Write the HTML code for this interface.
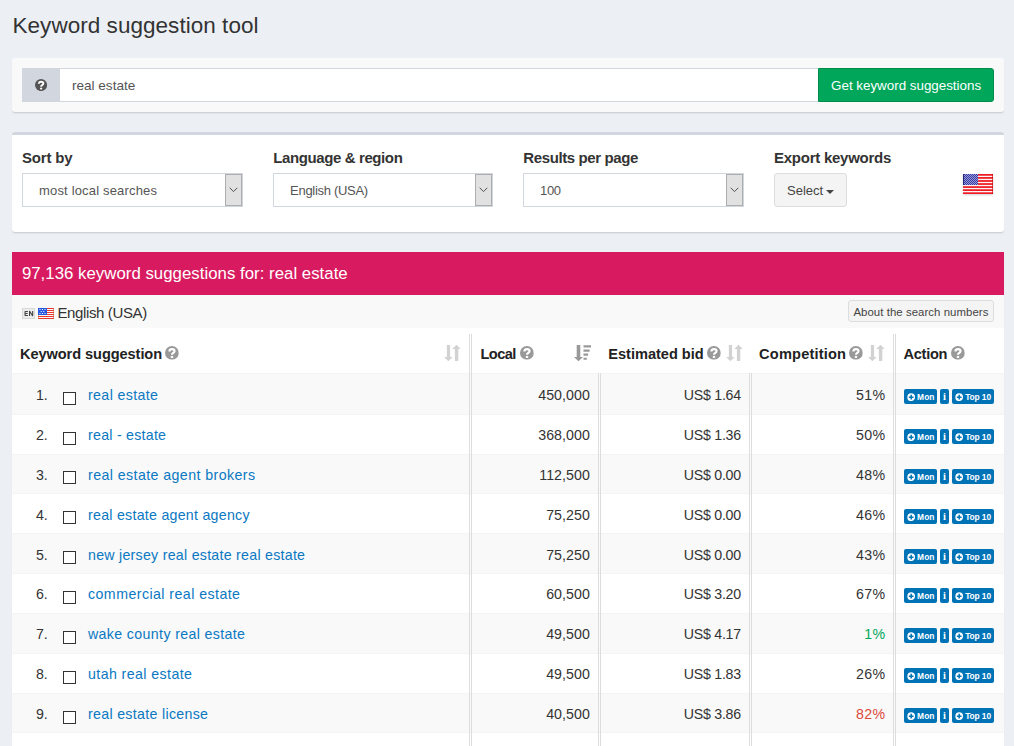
<!DOCTYPE html>
<html><head><meta charset="utf-8"><title>Keyword suggestion tool</title>
<style>
*{box-sizing:border-box;margin:0;padding:0}
html,body{width:1014px;height:746px;overflow:hidden}
body{background:#ecf0f5;font-family:"Liberation Sans",sans-serif;color:#333;position:relative;font-size:14px}
.a{position:absolute;white-space:nowrap;line-height:1}
.box{position:absolute;background:#fff;border-radius:3px;box-shadow:0 1px 1px rgba(0,0,0,.1),0 2px 1px rgba(0,0,0,.03)}
.sel{position:absolute;height:34px;background:#fff;border:1px solid #d2d6de}
.sel .arr{position:absolute;right:0;top:0;width:17px;height:32px;background:#e1e1e1;border:1px solid #adadad}
.sel svg{position:absolute;left:3px;top:12px}
.row{position:absolute;left:12px;width:992px;border-top:1px solid #f4f4f4}
.odd{background:#f9f9f9}
.vs{position:absolute;width:3px;border-left:1px solid #ddd;border-right:1px solid #ddd}
.cb{position:absolute;left:63px;width:13px;height:13px;border:1px solid #333;background:#fff}
.btn{position:absolute;height:15px;background:#0073b7;border-radius:2px}
.ab{position:absolute}
</style></head>
<body>
<svg width="0" height="0" style="position:absolute">
<defs>
<symbol id="q" viewBox="0 0 14 14"><circle cx="7" cy="7" r="7"/><path d="M4.5 5.5C4.5 3.9 5.5 3.1 7 3.1C8.6 3.1 9.7 3.9 9.7 5.2C9.7 7.1 7.1 7 7.1 8.9" fill="none" stroke="#fff" stroke-width="2.2"/><rect x="5.9" y="10.1" width="2.4" height="2" fill="#fff"/></symbol>
<symbol id="pc" viewBox="0 0 10 10"><circle cx="5" cy="5" r="4.6" fill="#fff"/><path d="M4.1 2.2h1.8v1.9h1.9v1.8h-1.9v1.9h-1.8v-1.9h-1.9v-1.8h1.9z" fill="#0073b7"/></symbol>
<symbol id="srt" viewBox="0 0 18 18"><path d="M2.85 1h3.25v11.9h2.6l-4.3 4.3l-4.4-4.3h2.85z"/><path d="M10.9 17h3.4v-12.1h2.4l-4.2-4.2l-4.2 4.2h2.6z"/></symbol>
<symbol id="srtd" viewBox="0 0 18 18"><path d="M2.7 1.1h3.6v11.9h2.7l-4.5 4.3l-4.5-4.3h2.7z"/><path d="M9.5 1.3h7.5v2.3h-7.5zM9.5 5.4h6.1v2.4h-6.1zM9.5 9.5h4.6v2.2h-4.6zM9.5 13.7h3.3v2h-3.3z"/></symbol>
<pattern id="st" width="2" height="2" patternUnits="userSpaceOnUse"><rect width="2" height="2" fill="#3439a8"/><circle cx=".5" cy=".5" r=".46" fill="#fff"/><circle cx="1.5" cy="1.5" r=".46" fill="#fff"/></pattern>
<symbol id="us" viewBox="0 0 30 20"><rect width="30" height="20" fill="#fff4f4"/><g fill="#ee1b24"><rect y="0" width="30" height="1.75"/><rect y="3.05" width="30" height="1.75"/><rect y="6.1" width="30" height="1.75"/><rect y="9.15" width="30" height="1.75"/><rect y="12.2" width="30" height="1.75"/><rect y="15.25" width="30" height="1.75"/><rect y="18.3" width="30" height="1.7"/></g><rect x="29" width="1" height="20" fill="#c40000" opacity=".6"/><rect width="15" height="11" fill="url(#st)"/><rect width="1" height="11" fill="#23277a"/></symbol>
<symbol id="us2" viewBox="0 0 16 11"><rect width="16" height="11" fill="#fff"/><g fill="#e8352e"><rect y="0" width="16" height="1"/><rect y="2" width="16" height="1"/><rect y="4" width="16" height="1"/><rect y="6" width="16" height="1"/><rect y="8" width="16" height="1"/><rect y="10" width="16" height="1"/></g><rect x="0" width=".7" height="11" fill="#c8603a" opacity=".7"/><rect x="15.3" width=".7" height="11" fill="#c8603a" opacity=".8"/><rect width="9" height="7" fill="#2458de"/><g fill="#fff"><rect x="1.5" y="1" width="1" height="1"/><rect x="4" y="1" width="1" height="1"/><rect x="6.5" y="1" width="1" height="1"/><rect x="2.7" y="3" width="1" height="1"/><rect x="5.2" y="3" width="1" height="1"/><rect x="1.5" y="5" width="1" height="1"/><rect x="4" y="5" width="1" height="1"/><rect x="6.5" y="5" width="1" height="1"/></g></symbol>
</defs></svg>
<div class="box" style="left:12px;top:58px;width:992px;height:54px;background:#f9f9f9"></div>
<div class="ab" style="left:22px;top:68px;width:38px;height:34px;background:#d2d6de"></div>
<svg class="ab" style="left:34.9px;top:78.8px" width="12.1" height="12.1" fill="#555"><use href="#q"/></svg>
<div class="ab" style="left:60px;top:68px;width:758px;height:34px;background:#fff;border:1px solid #d2d6de;border-left:0;border-right:0"></div>
<div class="ab" style="left:818px;top:68px;width:176px;height:34px;background:#00a65a;border:1px solid #008d4c;border-radius:0 3px 3px 0"></div>
<div class="box" style="left:12px;top:132px;width:992px;height:100px;border-top:3px solid #d2d6de"></div>
<div class="sel" style="left:22px;top:173px;width:221px"><div class="arr"><svg width="9" height="6" viewBox="0 0 9 6"><path d="M0.7 0.8L4.5 4.6L8.3 0.8" fill="none" stroke="#505050" stroke-width="1"/></svg></div></div>
<div class="sel" style="left:273px;top:173px;width:220px"><div class="arr"><svg width="9" height="6" viewBox="0 0 9 6"><path d="M0.7 0.8L4.5 4.6L8.3 0.8" fill="none" stroke="#505050" stroke-width="1"/></svg></div></div>
<div class="sel" style="left:523px;top:173px;width:221px"><div class="arr"><svg width="9" height="6" viewBox="0 0 9 6"><path d="M0.7 0.8L4.5 4.6L8.3 0.8" fill="none" stroke="#505050" stroke-width="1"/></svg></div></div>
<div class="ab" style="left:774px;top:173px;width:73px;height:34px;background:#f4f4f4;border:1px solid #ddd;border-radius:3px"></div>
<div class="ab" style="left:826px;top:190px;width:0;height:0;border-left:4px solid transparent;border-right:4px solid transparent;border-top:4px solid #444"></div>
<svg class="ab" style="left:963px;top:174px;filter:drop-shadow(0 1px 1px rgba(0,0,0,.18))" width="30" height="20"><use href="#us"/></svg>
<div class="box" style="left:12px;top:252px;width:992px;height:520px;border-radius:3px 3px 0 0"></div>
<div class="ab" style="left:12px;top:252px;width:992px;height:43px;background:#d81b60"></div>
<div class="ab" style="left:12px;top:295px;width:992px;height:33px;background:#f9f9f9"></div>
<svg class="ab" style="left:22px;top:308px" width="13" height="11" viewBox="0 0 13 11"><rect x=".5" y=".5" width="12" height="10" fill="#ececec" stroke="#d9d9d9"/><path d="M5.9 3.55H3.05V7.45H5.9M3.05 5.5H5.6M7.55 8V3L10.65 8V3" fill="none" stroke="#444" stroke-width="1.1" stroke-linejoin="bevel"/></svg>
<svg class="ab" style="left:38px;top:308px" width="16" height="11"><use href="#us2"/></svg>
<div class="ab" style="left:848px;top:300px;width:146px;height:22px;background:#f4f4f4;border:1px solid #ddd;border-radius:3px"></div>
<svg class="ab" style="left:165.1px;top:346.1px" width="13.8" height="13.8" fill="#999"><use href="#q"/></svg>
<svg class="ab" style="left:520.0px;top:346.1px" width="13.8" height="13.8" fill="#999"><use href="#q"/></svg>
<svg class="ab" style="left:707.0px;top:346.1px" width="13.8" height="13.8" fill="#999"><use href="#q"/></svg>
<svg class="ab" style="left:849.0px;top:346.1px" width="13.8" height="13.8" fill="#999"><use href="#q"/></svg>
<svg class="ab" style="left:950.8px;top:346.1px" width="13.8" height="13.8" fill="#999"><use href="#q"/></svg>
<svg class="ab" style="left:444px;top:344px" width="18" height="18" fill="#d2d2d2"><use href="#srt"/></svg>
<svg class="ab" style="left:574px;top:344px" width="18" height="18" fill="#999"><use href="#srtd"/></svg>
<svg class="ab" style="left:725.7px;top:344px" width="18" height="18" fill="#d2d2d2"><use href="#srt"/></svg>
<svg class="ab" style="left:868.2px;top:344px" width="18" height="18" fill="#d2d2d2"><use href="#srt"/></svg>
<div class="row odd" style="top:373px;height:41px"></div><div class="cb" style="top:392px"></div><div class="btn" style="left:904px;top:389px;width:33px"></div><svg class="ab" style="left:906.7px;top:392.7px" width="8.4" height="8.4"><use href="#pc"/></svg><div class="btn" style="left:940px;top:389px;width:9px"></div><div class="a" style="left:943px;top:391.8px;font-family:'Liberation Serif',serif;font-size:10.5px;font-weight:bold;color:#fff">i</div><div class="btn" style="left:952px;top:389px;width:42px"></div><svg class="ab" style="left:954.8px;top:392.7px" width="8.4" height="8.4"><use href="#pc"/></svg>
<div class="row" style="top:414px;height:40px"></div><div class="cb" style="top:432px"></div><div class="btn" style="left:904px;top:429px;width:33px"></div><svg class="ab" style="left:906.7px;top:432.7px" width="8.4" height="8.4"><use href="#pc"/></svg><div class="btn" style="left:940px;top:429px;width:9px"></div><div class="a" style="left:943px;top:431.8px;font-family:'Liberation Serif',serif;font-size:10.5px;font-weight:bold;color:#fff">i</div><div class="btn" style="left:952px;top:429px;width:42px"></div><svg class="ab" style="left:954.8px;top:432.7px" width="8.4" height="8.4"><use href="#pc"/></svg>
<div class="row odd" style="top:454px;height:39px"></div><div class="cb" style="top:471px"></div><div class="btn" style="left:904px;top:469px;width:33px"></div><svg class="ab" style="left:906.7px;top:472.7px" width="8.4" height="8.4"><use href="#pc"/></svg><div class="btn" style="left:940px;top:469px;width:9px"></div><div class="a" style="left:943px;top:471.8px;font-family:'Liberation Serif',serif;font-size:10.5px;font-weight:bold;color:#fff">i</div><div class="btn" style="left:952px;top:469px;width:42px"></div><svg class="ab" style="left:954.8px;top:472.7px" width="8.4" height="8.4"><use href="#pc"/></svg>
<div class="row" style="top:493px;height:40px"></div><div class="cb" style="top:511px"></div><div class="btn" style="left:904px;top:509px;width:33px"></div><svg class="ab" style="left:906.7px;top:512.7px" width="8.4" height="8.4"><use href="#pc"/></svg><div class="btn" style="left:940px;top:509px;width:9px"></div><div class="a" style="left:943px;top:511.8px;font-family:'Liberation Serif',serif;font-size:10.5px;font-weight:bold;color:#fff">i</div><div class="btn" style="left:952px;top:509px;width:42px"></div><svg class="ab" style="left:954.8px;top:512.7px" width="8.4" height="8.4"><use href="#pc"/></svg>
<div class="row odd" style="top:533px;height:40px"></div><div class="cb" style="top:551px"></div><div class="btn" style="left:904px;top:549px;width:33px"></div><svg class="ab" style="left:906.7px;top:552.7px" width="8.4" height="8.4"><use href="#pc"/></svg><div class="btn" style="left:940px;top:549px;width:9px"></div><div class="a" style="left:943px;top:551.8px;font-family:'Liberation Serif',serif;font-size:10.5px;font-weight:bold;color:#fff">i</div><div class="btn" style="left:952px;top:549px;width:42px"></div><svg class="ab" style="left:954.8px;top:552.7px" width="8.4" height="8.4"><use href="#pc"/></svg>
<div class="row" style="top:573px;height:40px"></div><div class="cb" style="top:591px"></div><div class="btn" style="left:904px;top:588px;width:33px"></div><svg class="ab" style="left:906.7px;top:591.7px" width="8.4" height="8.4"><use href="#pc"/></svg><div class="btn" style="left:940px;top:588px;width:9px"></div><div class="a" style="left:943px;top:590.8px;font-family:'Liberation Serif',serif;font-size:10.5px;font-weight:bold;color:#fff">i</div><div class="btn" style="left:952px;top:588px;width:42px"></div><svg class="ab" style="left:954.8px;top:591.7px" width="8.4" height="8.4"><use href="#pc"/></svg>
<div class="row odd" style="top:613px;height:40px"></div><div class="cb" style="top:631px"></div><div class="btn" style="left:904px;top:628px;width:33px"></div><svg class="ab" style="left:906.7px;top:631.7px" width="8.4" height="8.4"><use href="#pc"/></svg><div class="btn" style="left:940px;top:628px;width:9px"></div><div class="a" style="left:943px;top:630.8px;font-family:'Liberation Serif',serif;font-size:10.5px;font-weight:bold;color:#fff">i</div><div class="btn" style="left:952px;top:628px;width:42px"></div><svg class="ab" style="left:954.8px;top:631.7px" width="8.4" height="8.4"><use href="#pc"/></svg>
<div class="row" style="top:653px;height:40px"></div><div class="cb" style="top:671px"></div><div class="btn" style="left:904px;top:668px;width:33px"></div><svg class="ab" style="left:906.7px;top:671.7px" width="8.4" height="8.4"><use href="#pc"/></svg><div class="btn" style="left:940px;top:668px;width:9px"></div><div class="a" style="left:943px;top:670.8px;font-family:'Liberation Serif',serif;font-size:10.5px;font-weight:bold;color:#fff">i</div><div class="btn" style="left:952px;top:668px;width:42px"></div><svg class="ab" style="left:954.8px;top:671.7px" width="8.4" height="8.4"><use href="#pc"/></svg>
<div class="row odd" style="top:693px;height:39px"></div><div class="cb" style="top:711px"></div><div class="btn" style="left:904px;top:708px;width:33px"></div><svg class="ab" style="left:906.7px;top:711.7px" width="8.4" height="8.4"><use href="#pc"/></svg><div class="btn" style="left:940px;top:708px;width:9px"></div><div class="a" style="left:943px;top:710.8px;font-family:'Liberation Serif',serif;font-size:10.5px;font-weight:bold;color:#fff">i</div><div class="btn" style="left:952px;top:708px;width:42px"></div><svg class="ab" style="left:954.8px;top:711.7px" width="8.4" height="8.4"><use href="#pc"/></svg>
<div class="row" style="top:732px;height:20px"></div>
<div class="vs" style="left:469px;top:334px;height:420px"></div>
<div class="vs" style="left:598px;top:373px;height:380px"></div>
<div class="vs" style="left:749px;top:373px;height:380px"></div>
<div class="vs" style="left:893px;top:334px;height:420px"></div>
<div class="a" id="title" style="left:12.5px;top:15.35px;font-size:22.5px;letter-spacing:0.038px;color:#333">Keyword suggestion tool</div>
<div class="a" id="inp" style="left:71.9px;top:79.00px;font-size:13.6px;letter-spacing:-0.008px;color:#555">real estate</div>
<div class="a" id="gks" style="left:831.1px;top:79.10px;font-size:13.4px;letter-spacing:-0.016px;color:#fff">Get keyword suggestions</div>
<div class="a" id="l1" style="left:21.9px;top:149.90px;font-size:15px;letter-spacing:-0.165px;font-weight:bold">Sort by</div>
<div class="a" id="l2" style="left:273.3px;top:149.90px;font-size:15px;letter-spacing:-0.396px;font-weight:bold">Language &amp; region</div>
<div class="a" id="l3" style="left:523.3px;top:149.90px;font-size:15px;letter-spacing:-0.392px;font-weight:bold">Results per page</div>
<div class="a" id="l4" style="left:774.0px;top:149.90px;font-size:15px;letter-spacing:-0.255px;font-weight:bold">Export keywords</div>
<div class="a" id="s1" style="left:39.0px;top:184.10px;font-size:13px;letter-spacing:0.173px;color:#555">most local searches</div>
<div class="a" id="s2" style="left:290.1px;top:184.10px;font-size:13px;letter-spacing:-0.295px;color:#555">English (USA)</div>
<div class="a" id="s3" style="left:540.1px;top:184.10px;font-size:13px;letter-spacing:-0.352px;color:#555">100</div>
<div class="a" id="selb" style="left:787.1px;top:184.10px;font-size:13px;letter-spacing:-0.028px;color:#444">Select</div>
<div class="a" id="cnt" style="left:21.9px;top:266.30px;font-size:16.8px;letter-spacing:0.028px;color:#fff">97,136 keyword suggestions for: real estate</div>
<div class="a" id="eng" style="left:57.4px;top:304.90px;font-size:15px;letter-spacing:-0.367px;">English (USA)</div>
<div class="a" id="abt" style="left:853.4px;top:307.10px;font-size:11.4px;letter-spacing:0.060px;color:#444">About the search numbers</div>
<div class="a" id="h1" style="left:20.0px;top:346.90px;font-size:14.6px;letter-spacing:-0.084px;font-weight:bold;color:#222">Keyword suggestion</div>
<div class="a" id="h2" style="left:480.4px;top:346.90px;font-size:14.6px;letter-spacing:-0.531px;font-weight:bold;color:#222">Local</div>
<div class="a" id="h3" style="left:608.3px;top:346.90px;font-size:14.6px;letter-spacing:-0.024px;font-weight:bold;color:#222">Estimated bid</div>
<div class="a" id="h4" style="left:759.1px;top:346.90px;font-size:14.6px;letter-spacing:0.177px;font-weight:bold;color:#222">Competition</div>
<div class="a" id="h5" style="left:903.5px;top:346.90px;font-size:14.6px;letter-spacing:-0.281px;font-weight:bold;color:#222">Action</div>
<div class="a" id="n0" style="left:36.1px;top:387.90px;font-size:14.2px;letter-spacing:-0.144px;">1.</div>
<div class="a" id="k0" style="left:88.0px;top:387.90px;font-size:14.2px;letter-spacing:0.375px;color:#0a78c2">real estate</div>
<div class="a" id="a0" style="right:424.15px;top:387.90px;font-size:14.2px;letter-spacing:0.050px;">450,000</div>
<div class="a" id="b0" style="right:273.17px;top:387.90px;font-size:14.2px;letter-spacing:-0.270px;">US$ 1.64</div>
<div class="a" id="c0" style="right:128.40px;top:387.90px;font-size:14.2px;letter-spacing:0.400px;color:#333">51%</div>
<div class="a" id="m0" style="left:917.1px;top:392.80px;font-size:8.4px;letter-spacing:0.091px;color:#fff;font-weight:bold">Mon</div>
<div class="a" id="t0" style="left:965.2px;top:392.80px;font-size:8.4px;letter-spacing:-0.095px;color:#fff;font-weight:bold">Top 10</div>
<div class="a" id="n1" style="left:36.1px;top:427.90px;font-size:14.2px;letter-spacing:-0.144px;">2.</div>
<div class="a" id="k1" style="left:88.0px;top:427.90px;font-size:14.2px;letter-spacing:0.257px;color:#0a78c2">real - estate</div>
<div class="a" id="a1" style="right:424.15px;top:427.90px;font-size:14.2px;letter-spacing:0.050px;">368,000</div>
<div class="a" id="b1" style="right:273.17px;top:427.90px;font-size:14.2px;letter-spacing:-0.270px;">US$ 1.36</div>
<div class="a" id="c1" style="right:128.40px;top:427.90px;font-size:14.2px;letter-spacing:0.400px;color:#333">50%</div>
<div class="a" id="m1" style="left:917.1px;top:432.80px;font-size:8.4px;letter-spacing:0.091px;color:#fff;font-weight:bold">Mon</div>
<div class="a" id="t1" style="left:965.2px;top:432.80px;font-size:8.4px;letter-spacing:-0.095px;color:#fff;font-weight:bold">Top 10</div>
<div class="a" id="n2" style="left:36.1px;top:467.90px;font-size:14.2px;letter-spacing:-0.144px;">3.</div>
<div class="a" id="k2" style="left:88.0px;top:467.90px;font-size:14.2px;letter-spacing:0.419px;color:#0a78c2">real estate agent brokers</div>
<div class="a" id="a2" style="right:424.15px;top:467.90px;font-size:14.2px;letter-spacing:0.050px;">112,500</div>
<div class="a" id="b2" style="right:273.17px;top:467.90px;font-size:14.2px;letter-spacing:-0.270px;">US$ 0.00</div>
<div class="a" id="c2" style="right:128.40px;top:467.90px;font-size:14.2px;letter-spacing:0.400px;color:#333">48%</div>
<div class="a" id="m2" style="left:917.1px;top:472.80px;font-size:8.4px;letter-spacing:0.091px;color:#fff;font-weight:bold">Mon</div>
<div class="a" id="t2" style="left:965.2px;top:472.80px;font-size:8.4px;letter-spacing:-0.095px;color:#fff;font-weight:bold">Top 10</div>
<div class="a" id="n3" style="left:36.1px;top:507.90px;font-size:14.2px;letter-spacing:-0.144px;">4.</div>
<div class="a" id="k3" style="left:88.0px;top:507.90px;font-size:14.2px;letter-spacing:0.266px;color:#0a78c2">real estate agent agency</div>
<div class="a" id="a3" style="right:424.15px;top:507.90px;font-size:14.2px;letter-spacing:0.050px;">75,250</div>
<div class="a" id="b3" style="right:273.17px;top:507.90px;font-size:14.2px;letter-spacing:-0.270px;">US$ 0.00</div>
<div class="a" id="c3" style="right:128.40px;top:507.90px;font-size:14.2px;letter-spacing:0.400px;color:#333">46%</div>
<div class="a" id="m3" style="left:917.1px;top:512.80px;font-size:8.4px;letter-spacing:0.091px;color:#fff;font-weight:bold">Mon</div>
<div class="a" id="t3" style="left:965.2px;top:512.80px;font-size:8.4px;letter-spacing:-0.095px;color:#fff;font-weight:bold">Top 10</div>
<div class="a" id="n4" style="left:36.1px;top:547.90px;font-size:14.2px;letter-spacing:-0.144px;">5.</div>
<div class="a" id="k4" style="left:88.0px;top:547.90px;font-size:14.2px;letter-spacing:0.267px;color:#0a78c2">new jersey real estate real estate</div>
<div class="a" id="a4" style="right:424.15px;top:547.90px;font-size:14.2px;letter-spacing:0.050px;">75,250</div>
<div class="a" id="b4" style="right:273.17px;top:547.90px;font-size:14.2px;letter-spacing:-0.270px;">US$ 0.00</div>
<div class="a" id="c4" style="right:128.40px;top:547.90px;font-size:14.2px;letter-spacing:0.400px;color:#333">43%</div>
<div class="a" id="m4" style="left:917.1px;top:552.80px;font-size:8.4px;letter-spacing:0.091px;color:#fff;font-weight:bold">Mon</div>
<div class="a" id="t4" style="left:965.2px;top:552.80px;font-size:8.4px;letter-spacing:-0.095px;color:#fff;font-weight:bold">Top 10</div>
<div class="a" id="n5" style="left:36.1px;top:586.90px;font-size:14.2px;letter-spacing:-0.144px;">6.</div>
<div class="a" id="k5" style="left:88.0px;top:586.90px;font-size:14.2px;letter-spacing:0.442px;color:#0a78c2">commercial real estate</div>
<div class="a" id="a5" style="right:424.15px;top:586.90px;font-size:14.2px;letter-spacing:0.050px;">60,500</div>
<div class="a" id="b5" style="right:273.17px;top:586.90px;font-size:14.2px;letter-spacing:-0.270px;">US$ 3.20</div>
<div class="a" id="c5" style="right:128.40px;top:586.90px;font-size:14.2px;letter-spacing:0.400px;color:#333">67%</div>
<div class="a" id="m5" style="left:917.1px;top:591.80px;font-size:8.4px;letter-spacing:0.091px;color:#fff;font-weight:bold">Mon</div>
<div class="a" id="t5" style="left:965.2px;top:591.80px;font-size:8.4px;letter-spacing:-0.095px;color:#fff;font-weight:bold">Top 10</div>
<div class="a" id="n6" style="left:36.1px;top:626.90px;font-size:14.2px;letter-spacing:-0.144px;">7.</div>
<div class="a" id="k6" style="left:88.0px;top:626.90px;font-size:14.2px;letter-spacing:0.361px;color:#0a78c2">wake county real estate</div>
<div class="a" id="a6" style="right:424.15px;top:626.90px;font-size:14.2px;letter-spacing:0.050px;">49,500</div>
<div class="a" id="b6" style="right:273.17px;top:626.90px;font-size:14.2px;letter-spacing:-0.270px;">US$ 4.17</div>
<div class="a" id="c6" style="right:128.40px;top:626.90px;font-size:14.2px;letter-spacing:0.400px;color:#00a65a">1%</div>
<div class="a" id="m6" style="left:917.1px;top:631.80px;font-size:8.4px;letter-spacing:0.091px;color:#fff;font-weight:bold">Mon</div>
<div class="a" id="t6" style="left:965.2px;top:631.80px;font-size:8.4px;letter-spacing:-0.095px;color:#fff;font-weight:bold">Top 10</div>
<div class="a" id="n7" style="left:36.1px;top:666.90px;font-size:14.2px;letter-spacing:-0.144px;">8.</div>
<div class="a" id="k7" style="left:88.0px;top:666.90px;font-size:14.2px;letter-spacing:0.412px;color:#0a78c2">utah real estate</div>
<div class="a" id="a7" style="right:424.15px;top:666.90px;font-size:14.2px;letter-spacing:0.050px;">49,500</div>
<div class="a" id="b7" style="right:273.17px;top:666.90px;font-size:14.2px;letter-spacing:-0.270px;">US$ 1.83</div>
<div class="a" id="c7" style="right:128.40px;top:666.90px;font-size:14.2px;letter-spacing:0.400px;color:#333">26%</div>
<div class="a" id="m7" style="left:917.1px;top:671.80px;font-size:8.4px;letter-spacing:0.091px;color:#fff;font-weight:bold">Mon</div>
<div class="a" id="t7" style="left:965.2px;top:671.80px;font-size:8.4px;letter-spacing:-0.095px;color:#fff;font-weight:bold">Top 10</div>
<div class="a" id="n8" style="left:36.1px;top:706.90px;font-size:14.2px;letter-spacing:-0.144px;">9.</div>
<div class="a" id="k8" style="left:88.0px;top:706.90px;font-size:14.2px;letter-spacing:0.313px;color:#0a78c2">real estate license</div>
<div class="a" id="a8" style="right:424.15px;top:706.90px;font-size:14.2px;letter-spacing:0.050px;">40,500</div>
<div class="a" id="b8" style="right:273.17px;top:706.90px;font-size:14.2px;letter-spacing:-0.270px;">US$ 3.86</div>
<div class="a" id="c8" style="right:128.40px;top:706.90px;font-size:14.2px;letter-spacing:0.400px;color:#dd4b39">82%</div>
<div class="a" id="m8" style="left:917.1px;top:711.80px;font-size:8.4px;letter-spacing:0.091px;color:#fff;font-weight:bold">Mon</div>
<div class="a" id="t8" style="left:965.2px;top:711.80px;font-size:8.4px;letter-spacing:-0.095px;color:#fff;font-weight:bold">Top 10</div>
</body></html>
